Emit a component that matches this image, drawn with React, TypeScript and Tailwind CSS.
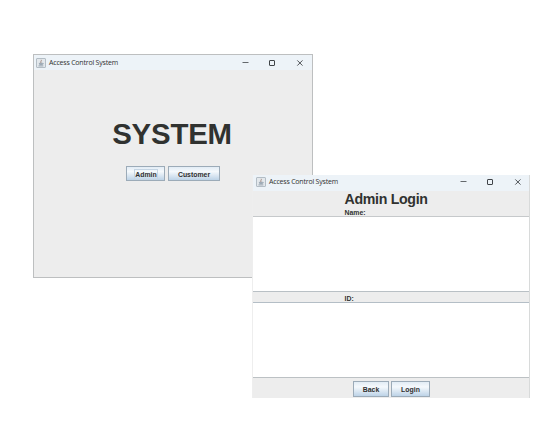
import type { ReactNode } from "react";

function JavaIcon() {
  return (
    <svg width="10" height="10" viewBox="0 0 10 10" className="shrink-0">
      <rect x="0.5" y="0.5" width="9" height="9" rx="0.5" fill="#e3e8ec" stroke="#b3bdc5" />
      <path d="M5.2 1.8C5.9 3 4.1 3.4 5 5" fill="none" stroke="#9c8176" strokeWidth="0.9" />
      <path d="M2.9 5.4h3.7M3.3 6.6h3M2.5 7.9h4.8M6.5 5.3c1.3-.1 1 1-.1 1.2" fill="none" stroke="#8393a1" strokeWidth="0.8" />
    </svg>
  );
}

function TitleBar({ className, controls }: { className: string; controls: string }) {
  return (
    <div className={`flex shrink-0 items-center bg-[#edf3f8] ${className}`}>
      <JavaIcon />
      <span className="ml-[3px] whitespace-nowrap font-['Open_Sans',sans-serif] text-[7px] leading-[10px] tracking-[-0.2px] text-[#303030]">
        Access Control System
      </span>
      <svg width="64" height="10" viewBox="0 0 64 10" className={`ml-auto ${controls}`} fill="none" stroke="#404448">
        <path d="M1.5 4.5h6" strokeWidth="0.8" />
        <rect x="28.5" y="2.5" width="5" height="5" rx="0.4" strokeWidth="1" />
        <path d="M56.3 2.4l5.2 5.2M61.5 2.4l-5.2 5.2" strokeWidth="0.9" />
      </svg>
    </div>
  );
}

function SwingButton({ children, className, focused }: { children: ReactNode; className: string; focused?: boolean }) {
  return (
    <button
      className={`flex items-center justify-center border border-[#9cabb8] bg-linear-to-b from-[#e2ecf5] via-[#f5f9fc] via-35% to-[#bdd3e7] pt-px text-[6.9px] leading-[9px] font-bold text-[#303030] ${className}`}
    >
      <span className={focused ? "outline outline-[#c5d5e4]" : ""}>{children}</span>
    </button>
  );
}

export default function App() {
  return (
    <div className="relative h-[446px] w-[560px] overflow-hidden bg-white font-['Liberation_Sans',Arial,sans-serif] text-[#303230]">
      <section className="absolute top-[54px] left-[33px] flex h-[224px] w-[280px] flex-col border border-[#bdbfc0] bg-[#ededed]">
        <TitleBar className="h-[15px] pl-[2px]" controls="mr-[7px]" />
        <h1 className="mt-[47px] pr-[2px] text-center text-[29.4px] leading-[34px] font-bold tracking-[-0.2px]">SYSTEM</h1>
        <div className="mt-[15px] flex gap-[3px] pl-[92px]">
          <SwingButton className="h-[15px] w-[39px] pl-px" focused>Admin</SwingButton>
          <SwingButton className="h-[15px] w-[52px]">Customer</SwingButton>
        </div>
      </section>

      <section className="absolute top-[175px] left-[252px] flex h-[223px] w-[278px] flex-col border-r border-l border-r-[#d8dada] border-l-[#eeeeee] bg-[#ededed]">
        <TitleBar className="h-4 pb-[2px] pl-[3px]" controls="mr-[6px]" />
        <div className="h-[25px] shrink-0 pl-[91.5px]">
          <h2 className="text-[14.2px] leading-[17px] font-bold tracking-[-0.32px]">Admin Login</h2>
          <div className="text-[6.9px] leading-[9px] font-bold">Name:</div>
        </div>
        <div className="h-[76px] shrink-0 border-y border-t-[#c6c9cb] border-b-[#b9c0c5] bg-white" />
        <div className="h-[10px] shrink-0 pl-[91.5px] text-[6.9px] leading-[13px] font-bold">ID:</div>
        <div className="h-[76px] shrink-0 border-y border-t-[#b4bec6] border-b-[#bcc1c4] bg-white" />
        <div className="flex gap-[2px] pt-[3px] pl-[100px]">
          <SwingButton className="h-4 w-[36px]">Back</SwingButton>
          <SwingButton className="h-4 w-[39px]">Login</SwingButton>
        </div>
      </section>
    </div>
  );
}
